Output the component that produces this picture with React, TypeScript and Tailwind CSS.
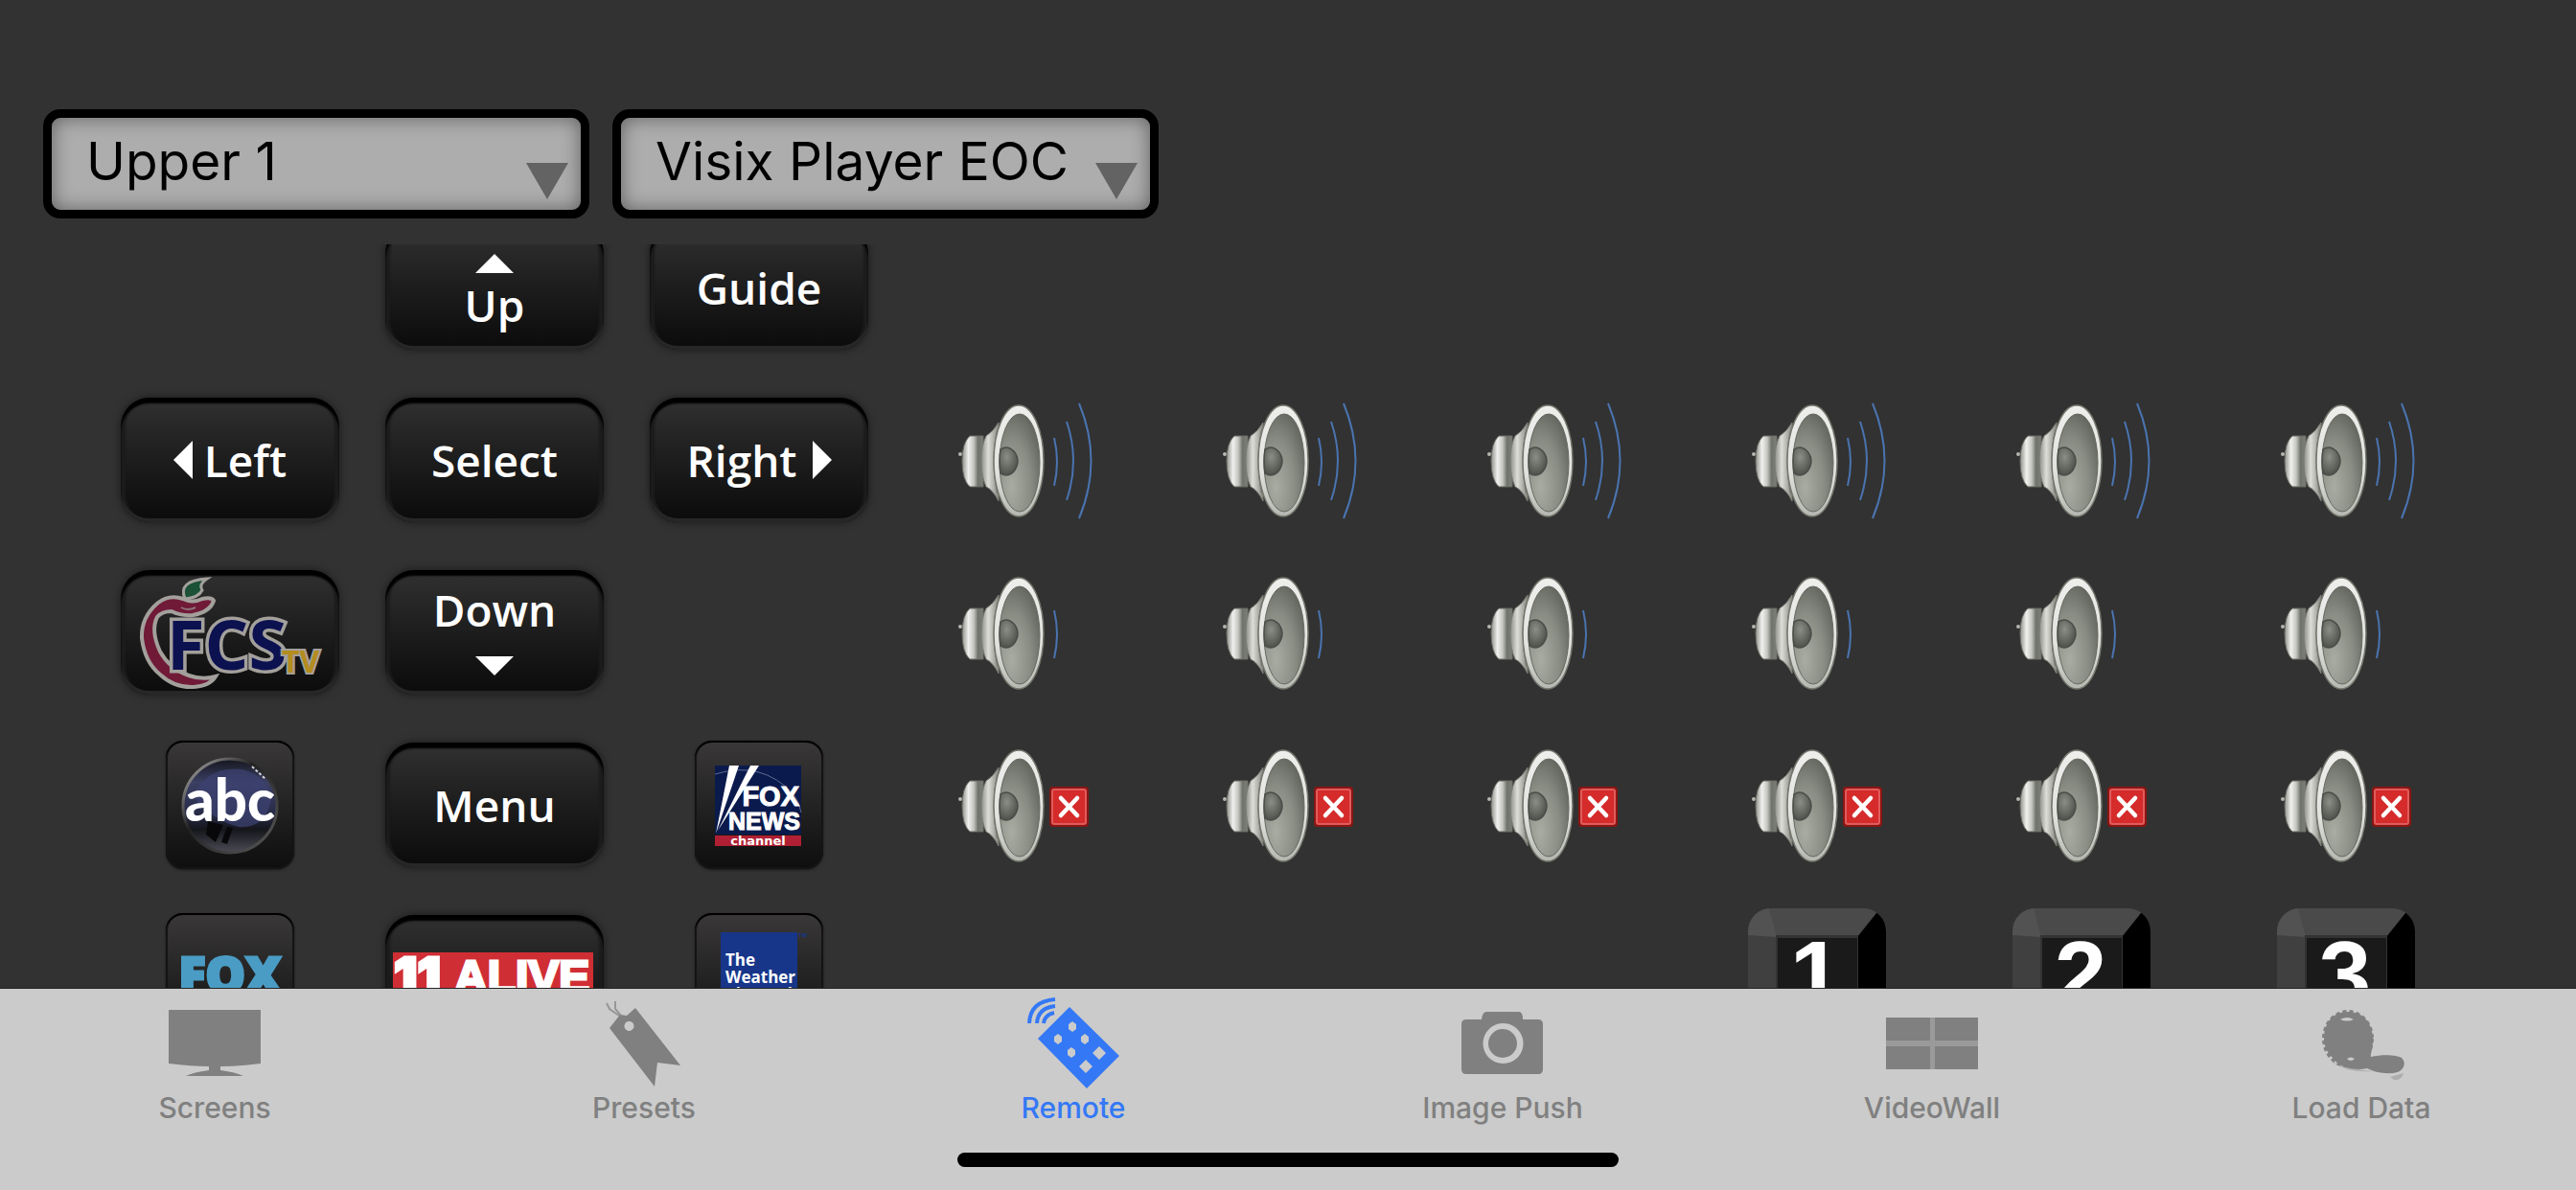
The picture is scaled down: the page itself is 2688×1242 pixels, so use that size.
import React, { useState, Fragment } from "react";

type TabOption = {
  name: string;
  icon: React.ReactNode;
};

type Level = "up" | "down" | "mute";

/* shared gradients of the speakers, the globe and the number keys */
const Defs: React.FC = () => (
  <svg className="absolute h-0 w-0" aria-hidden="true">
    <defs>
      <linearGradient id="metal" x1="0" y1="0" x2="1" y2="0">
        <stop offset="0" stopColor="#8f918b" />
        <stop offset="0.3" stopColor="#f0f0ee" />
        <stop offset="0.55" stopColor="#c4c5c0" />
        <stop offset="0.75" stopColor="#70736b" />
        <stop offset="1" stopColor="#7d8078" />
      </linearGradient>
      <linearGradient id="neck" x1="0" y1="0" x2="1" y2="0">
        <stop offset="0" stopColor="#8b8d86" />
        <stop offset="0.4" stopColor="#deded9" />
        <stop offset="1" stopColor="#85877f" />
      </linearGradient>
      <linearGradient id="rim" x1="0" y1="0" x2="0" y2="1">
        <stop offset="0" stopColor="#eeeeec" />
        <stop offset="0.6" stopColor="#e2e3df" />
        <stop offset="1" stopColor="#b4b7af" />
      </linearGradient>
      <radialGradient id="cone" cx="0.3" cy="0.75" r="0.8">
        <stop offset="0" stopColor="#a9aca3" />
        <stop offset="0.6" stopColor="#898c83" />
        <stop offset="1" stopColor="#656860" />
      </radialGradient>
      <radialGradient id="hub" cx="0.4" cy="0.35" r="0.7">
        <stop offset="0" stopColor="#8b8e86" />
        <stop offset="1" stopColor="#4a4c47" />
      </radialGradient>
      <linearGradient id="globe" x1="0" y1="0" x2="0" y2="1">
        <stop offset="0" stopColor="#15161d" />
        <stop offset="0.25" stopColor="#3b4064" />
        <stop offset="0.6" stopColor="#262a45" />
        <stop offset="0.75" stopColor="#15161b" />
        <stop offset="1" stopColor="#4b4c55" />
      </linearGradient>
      <linearGradient id="globeRim" x1="0" y1="0" x2="1" y2="1">
        <stop offset="0" stopColor="#b5b5b5" />
        <stop offset="0.4" stopColor="#222" />
        <stop offset="1" stopColor="#5a5a5a" />
      </linearGradient>
      <clipPath id="keyShape">
        <rect width="144" height="144" rx="24" />
      </clipPath>
    </defs>
  </svg>
);

const Speaker: React.FC<{ level: Level }> = ({ level }) => (
  <svg viewBox="-2 -1 144 144" className="size-36" aria-hidden="true">
    <circle cx="4" cy="65" r="2" fill="#b5b6b0" />
    <path
      d="M14 46 H28 V99 H14 Q6 92 6 72 Q6 53 14 46Z"
      fill="url(#metal)"
      stroke="#6b6d66"
    />
    <path
      d="M31 46 Q38 42 44 32 V114 Q38 102 31 99 Q26 88 26 72 Q26 56 31 46Z"
      fill="url(#neck)"
      stroke="#7a7c75"
    />
    <path d="M43 40 Q36 72 43 106" fill="none" stroke="#74776f" strokeWidth="2" />
    <ellipse
      cx="65"
      cy="72"
      rx="26"
      ry="58"
      fill="url(#rim)"
      stroke="#74776d"
      strokeWidth="1.5"
    />
    <ellipse cx="66" cy="74" rx="21" ry="51" fill="url(#cone)" stroke="#666960" />
    <path
      d="M46 60 Q53 55 60 62 Q68 72 60 83 Q53 90 46 85 Q44 72 46 60Z"
      fill="url(#hub)"
      stroke="#4b4d48"
      strokeWidth="1.5"
    />
    {level !== "mute" && (
      <path
        d="M102 48 Q108 73 102 98"
        fill="none"
        stroke="#4a74b0"
        strokeWidth="2"
      />
    )}
    {level === "up" && (
      <g fill="none" stroke="#4a74b0" strokeWidth="2">
        <path d="M115 31 Q129 72 115 113" />
        <path d="M128 12 Q153 72 128 132" />
      </g>
    )}
    {level === "mute" && (
      <g>
        <rect x="97" y="52" width="41" height="42" rx="4" fill="#8c1512" />
        <rect
          x="100"
          y="55"
          width="35"
          height="36"
          rx="2"
          fill="#d52b2b"
          stroke="#e05c5c"
          strokeWidth="2"
        />
        <path
          d="M109 64 L126 82 M126 64 L109 82"
          stroke="#fff"
          strokeWidth="4.5"
          strokeLinecap="round"
        />
      </g>
    )}
  </svg>
);

const Arrow: React.FC<{ to: "up" | "down" | "left" | "right" }> = ({ to }) => {
  switch (to) {
    case "up":
      return (
        <svg viewBox="0 0 40 20" className="h-5 w-10" fill="#fff">
          <path d="M20 0 L40 20 H0Z" />
        </svg>
      );
    case "down":
      return (
        <svg viewBox="0 0 40 20" className="h-5 w-10" fill="#fff">
          <path d="M0 0 H40 L20 20Z" />
        </svg>
      );
    case "left":
      return (
        <svg viewBox="0 0 20 40" className="h-10 w-5" fill="#fff">
          <path d="M20 0 V40 L0 20Z" />
        </svg>
      );
    default:
      return (
        <svg viewBox="0 0 20 40" className="h-10 w-5" fill="#fff">
          <path d="M0 0 V40 L20 20Z" />
        </svg>
      );
  }
};

type KeyOption = {
  label?: string;
  children: React.ReactNode;
};

/* wide glossy button */
const WideKey: React.FC<KeyOption> = ({ label, children }) => (
  <button
    type="button"
    aria-label={label}
    className="flex h-[130px] w-[228px] items-center justify-center overflow-hidden rounded-[30px] bg-linear-to-b from-[#323131] via-[#1d1d1d] to-[#0b0b0b] font-['Open_Sans',sans-serif] text-[46px] leading-[50px] font-semibold text-white shadow-[inset_0_6px_2px_#000,inset_0_-4px_0_#272727,inset_5px_0_2px_#1c1c1c,inset_-5px_0_2px_#1c1c1c,0_0_8px_rgba(0,0,0,0.5)]"
  >
    {children}
  </button>
);

/* square channel button */
const SquareKey: React.FC<KeyOption> = ({ label, children }) => (
  <button
    type="button"
    aria-label={label}
    className="size-[134px] overflow-hidden rounded-[18px] bg-linear-to-b from-[#3a3838] via-[#242323] to-[#0e0e0e] shadow-[inset_0_2px_0_#000,inset_0_0_0_2px_#141414,0_1px_3px_rgba(0,0,0,0.5)]"
  >
    {children}
  </button>
);

const NumberKey: React.FC<{ value: number }> = ({ value }) => (
  <button type="button" className="size-36">
    <svg viewBox="0 0 144 144" className="size-36">
      <g clipPath="url(#keyShape)">
        <rect width="144" height="144" fill="#404040" />
        <path d="M0 0 H144 L114 30 H30Z" fill="#4a4a4a" />
        <path d="M0 0 H22 L30 30 L0 28Z" fill="#525252" />
        <path d="M138 0 L114 30 V114 L144 144 V0Z" fill="#000" />
        <path d="M0 144 L30 114 H114 L144 144Z" fill="#111" />
        <rect x="29" y="28" width="86" height="88" fill="#333" />
        <rect x="31" y="31" width="83" height="83" fill="#1a1a1a" />
      </g>
      <text
        x="71"
        y="103"
        textAnchor="middle"
        fill="#fff"
        className="font-['Liberation_Sans',sans-serif] text-[98px] font-bold"
      >
        {value}
      </text>
    </svg>
  </button>
);

const FcsLogo: React.FC = () => (
  <svg viewBox="0 0 226 128" className="h-32 w-[226px]">
    <path
      d="M96 31 Q94 27 84 29 Q74 34 64 29 Q50 24 38 33 Q20 48 21 70 Q24 95 40 108 Q55 122 75 121 Q92 120 98 110 Q84 114 70 109 Q50 102 40 84 Q30 62 37 48 Q42 42 52 42 Q62 47 74 46 Q92 43 96 31Z"
      fill="#701a38"
      stroke="#a3a09c"
      strokeWidth="4"
    />
    <path d="M62 38 Q69 42 77 38" fill="none" stroke="#8d7377" strokeWidth="2" />
    <path
      d="M66 29 Q58 10 89 8 Q80 14 84 20 Q80 28 66 29Z"
      fill="#1b5136"
      stroke="#a3a09c"
      strokeWidth="3"
    />
    <g className="font-['Open_Sans',sans-serif] font-bold" paintOrder="stroke">
      <text x="47" y="103" fill="#0c1150" stroke="#a3a09c" strokeWidth="7" className="text-[72px]">
        FCS
      </text>
      <text x="167" y="106" fill="#b58c1e" stroke="#a3a09c" strokeWidth="4" className="text-[32px]">
        TV
      </text>
    </g>
  </svg>
);

const AbcLogo: React.FC = () => (
  <svg viewBox="0 0 134 134" className="size-full">
    <circle cx="67" cy="68" r="49" fill="url(#globe)" stroke="url(#globeRim)" strokeWidth="3" />
    <path d="M28 58 Q44 26 80 30 Q108 38 110 62 Q104 92 76 90 Q50 84 28 58Z" fill="#3c4270" opacity="0.75" />
    <path d="M44 84 L60 88 L52 106 L42 98Z M64 90 L70 91 L64 108 L58 106Z" fill="#08080a" />
    <path d="M90 27 L104 40" stroke="#d0d0d0" strokeWidth="2" strokeDasharray="3 2" />
    <text
      x="67"
      y="84"
      textAnchor="middle"
      fill="#fff"
      className="font-['Lato',sans-serif] text-[60px] font-black"
    >
      abc
    </text>
  </svg>
);

const FoxNewsLogo: React.FC = () => (
  <svg viewBox="0 0 134 134" className="size-full">
    <rect x="21" y="26" width="90" height="72" fill="#0a1a4c" />
    <path d="M21 35 Q70 20 103 56 Q109 64 111 75" fill="none" stroke="#5d6a92" />
    <path d="M36 26 H46 L22 97Z M58 26 H67 L24 94Z" fill="#fff" />
    <rect x="21" y="99" width="90" height="11" fill="#b01f33" />
    <g
      fill="#fff"
      className="font-['Liberation_Sans',sans-serif] font-bold"
      stroke="#fff"
      strokeWidth="1"
    >
      <text x="109" y="68" textAnchor="end" className="text-[29px]">
        FOX
      </text>
      <text x="110" y="93" textAnchor="end" className="text-[25px]">
        NEWS
      </text>
    </g>
    <text
      x="66"
      y="109"
      textAnchor="middle"
      fill="#fff"
      className="font-['DejaVu_Sans',sans-serif] text-[13px] font-bold"
    >
      channel
    </text>
  </svg>
);

const FoxLogo: React.FC = () => (
  <svg viewBox="0 0 134 134" className="size-full">
    <text
      x="67"
      y="83"
      textAnchor="middle"
      fill="#4a9cc4"
      stroke="#4a9cc4"
      strokeWidth="3"
      className="font-['Open_Sans',sans-serif] text-[52px] font-extrabold"
    >
      FOX
    </text>
  </svg>
);

const AliveLogo: React.FC = () => (
  <svg viewBox="0 0 226 128" className="h-32 w-[226px]">
    <rect x="7" y="38" width="209" height="52" fill="#d02e35" />
    <g fill="#fff" stroke="#fff" strokeWidth="3">
      <text x="8" y="82" className="font-['Inter',sans-serif] text-[54px] font-black">
        11
      </text>
      <text x="71" y="80" className="font-['Liberation_Sans',sans-serif] text-[48px] font-bold">
        ALIVE
      </text>
    </g>
  </svg>
);

const WeatherLogo: React.FC = () => (
  <svg viewBox="0 0 134 134" className="size-full">
    <rect x="27" y="20" width="80" height="80" fill="#17368a" />
    <g fill="#fff" className="font-['Open_Sans',sans-serif] text-[17px] font-bold">
      <text x="32" y="55">The</text>
      <text x="32" y="73">Weather</text>
      <text x="32" y="91">Channel</text>
    </g>
    <text x="108" y="25" fill="#17368a" className="font-['Open_Sans',sans-serif] text-[6px] font-bold">
      TM
    </text>
  </svg>
);

const levels: { code: Level; label: string }[] = [
  { code: "up", label: "Volume up" },
  { code: "down", label: "Volume down" },
  { code: "mute", label: "Mute" }
];
const zones = [1, 2, 3, 4, 5, 6];

const speakerRow = ({ code, label }: { code: Level; label: string }) =>
  zones.map((zone) => (
    <button type="button" key={`${code}-${zone}`} aria-label={`${label}, zone ${zone}`}>
      <Speaker level={code} />
    </button>
  ));

const tabs: TabOption[] = [
  {
    name: "Screens",
    icon: (
      <Fragment>
        <path d="M0 18 H96 V74 Q72 77 54 77 V81 Q70 83 78 87 H18 Q26 83 42 81 V77 Q24 77 0 74Z" />
      </Fragment>
    )
  },
  {
    name: "Presets",
    icon: (
      <Fragment>
        <path
          fillRule="evenodd"
          d="M39 16 L86 76 L62 73 L59 98 L12 37 L23 23 L30 24Z M32 30 a5 5 0 1 0 1 0Z"
        />
        <path
          d="M9 11 L12 17 L22 24 M18 9 L18 17 L24 24"
          fill="none"
          stroke="currentColor"
          strokeWidth="2"
          opacity="0.7"
        />
      </Fragment>
    )
  },
  {
    name: "Remote",
    icon: (
      <Fragment>
        <path
          fillRule="evenodd"
          d="M44 15 L96 66 L62 100 L11 48Z M47 30 l4 3 v5 l-4 3 l-4 -3 v-5Z M32 43 l4 3 v5 l-4 3 l-4 -3 v-5Z M60 43 l4 3 v5 l-4 3 l-4 -3 v-5Z M46 57 l4 3 v5 l-4 3 l-4 -3 v-5Z M75 56 l7 7 l-7 7 l-7 -7Z M61 70 l7 7 l-7 7 l-7 -7Z"
        />
        <g fill="none" stroke="currentColor" strokeWidth="4">
          <path d="M2 32 Q3 9 29 7" />
          <path d="M10 32 Q11 16 29 14" />
          <path d="M17 32 Q18 23 28 21" />
        </g>
      </Fragment>
    )
  },
  {
    name: "Image Push",
    icon: (
      <Fragment>
        <path
          fillRule="evenodd"
          d="M31 20 H65 Q69 20 69 28 H85 Q90 28 90 33 V80 Q90 85 85 85 H10 Q5 85 5 80 V33 Q5 28 10 28 H26 Q27 20 31 20Z M48 32 a21 21 0 1 0 1 0Z"
        />
        <circle cx="48" cy="53" r="15" />
      </Fragment>
    )
  },
  {
    name: "VideoWall",
    icon: (
      <Fragment>
        <rect x="0" y="26" width="96" height="54" opacity="0.65" />
        <path d="M0 26 H46 V50 H0Z M51 26 H96 V50 H51Z M0 56 H46 V80 H0Z M51 56 H96 V80 H51Z" />
      </Fragment>
    )
  },
  {
    name: "Load Data",
    icon: (
      <Fragment>
        <path
          fillRule="evenodd"
          d="M34 20 C52 20 60 34 60 49 C60 60 57 65 58 67 C70 64 86 65 90 68 C95 73 93 80 86 83 C74 86 62 83 54 79 C42 82 24 78 18 68 C12 62 9 56 9 48 C9 32 18 20 34 20Z M26 28 Q33 24 40 28 Q33 31 26 28Z M33 69 Q37 66 41 69 Q37 73 33 69Z"
        />
        <ellipse
          cx="34"
          cy="48"
          rx="25"
          ry="28"
          fill="none"
          stroke="currentColor"
          strokeWidth="4"
          strokeDasharray="4 3"
        />
        <path d="M16 72 Q34 84 60 82 Q34 80 16 72Z M78 88 Q86 86 92 84 Q90 92 82 91Z" opacity="0.4" />
      </Fragment>
    )
  }
];

type PickerOption = {
  label: string;
  value: string;
};

const Picker: React.FC<PickerOption> = ({ label, value }) => (
  <div className="relative w-[570px]">
    <select
      aria-label={label}
      defaultValue={value}
      className="h-[114px] w-full appearance-none rounded-[18px] border-[9px] border-black bg-[#adadad] pb-[6px] pl-9 font-['Inter',sans-serif] text-[55px] text-black shadow-[inset_0_0_20px_rgba(0,0,0,0.45)]"
    >
      <option>{value}</option>
    </select>
    <svg
      viewBox="0 0 44 38"
      className="pointer-events-none absolute right-[22px] bottom-5 h-[38px] w-11"
      fill="#636363"
    >
      <path d="M0 0 H44 L22 38Z" />
    </svg>
  </div>
);

const App: React.FC = () => {
  const [active, setActive] = useState("Remote");

  return (
    <div className="flex h-screen flex-col bg-[#323232]">
      <Defs />
      <header className="flex gap-6 px-[45px] pt-[114px] pb-[27px]">
        <Picker label="Screen" value="Upper 1" />
        <Picker label="Player" value="Visix Player EOC" />
      </header>

      {/* scrolled a little, so the first row is cut by the header */}
      <main className="min-h-0 flex-1 overflow-hidden px-[102px]">
        <div className="-mt-[45px] grid auto-rows-[180px] grid-cols-9 place-items-center">
          <div />
          <WideKey>
            <span className="flex flex-col items-center gap-2 pt-2">
              <Arrow to="up" />
              Up
            </span>
          </WideKey>
          <WideKey>Guide</WideKey>
          <div className="col-span-6" />

          <WideKey>
            <span className="flex items-center gap-3">
              <Arrow to="left" />
              Left
            </span>
          </WideKey>
          <WideKey>Select</WideKey>
          <WideKey>
            <span className="flex items-center gap-4">
              Right
              <Arrow to="right" />
            </span>
          </WideKey>
          {speakerRow(levels[0])}

          <WideKey label="FCS TV">
            <FcsLogo />
          </WideKey>
          <WideKey>
            <span className="flex flex-col items-center gap-6 pb-1">
              Down
              <Arrow to="down" />
            </span>
          </WideKey>
          <div />
          {speakerRow(levels[1])}

          <SquareKey label="ABC">
            <AbcLogo />
          </SquareKey>
          <WideKey>Menu</WideKey>
          <SquareKey label="Fox News Channel">
            <FoxNewsLogo />
          </SquareKey>
          {speakerRow(levels[2])}

          <SquareKey label="Fox">
            <FoxLogo />
          </SquareKey>
          <WideKey label="11 Alive">
            <AliveLogo />
          </WideKey>
          <SquareKey label="The Weather Channel">
            <WeatherLogo />
          </SquareKey>
          <div className="col-span-3" />
          <NumberKey value={1} />
          <NumberKey value={2} />
          <NumberKey value={3} />
        </div>
      </main>

      <footer className="flex flex-col items-center border-t border-[#232323] bg-[#cbcbcb] pt-1 pb-6">
        <nav className="grid w-full grid-cols-6">
          {tabs.map((item) => (
            <button
              type="button"
              key={item.name}
              onClick={() => setActive(item.name)}
              className={
                item.name === active
                  ? "flex flex-col items-center text-[#3478f6]"
                  : "flex flex-col items-center text-[#808080]"
              }
            >
              <svg viewBox="0 0 96 100" className="h-[100px] w-24" fill="currentColor">
                {item.icon}
              </svg>
              <span className="font-['Inter',sans-serif] text-[30px] leading-10 font-medium">
                {item.name}
              </span>
            </button>
          ))}
        </nav>
        <div className="mt-[27px] h-[15px] w-[690px] rounded-full bg-black" />
      </footer>
    </div>
  );
};

export default App;
